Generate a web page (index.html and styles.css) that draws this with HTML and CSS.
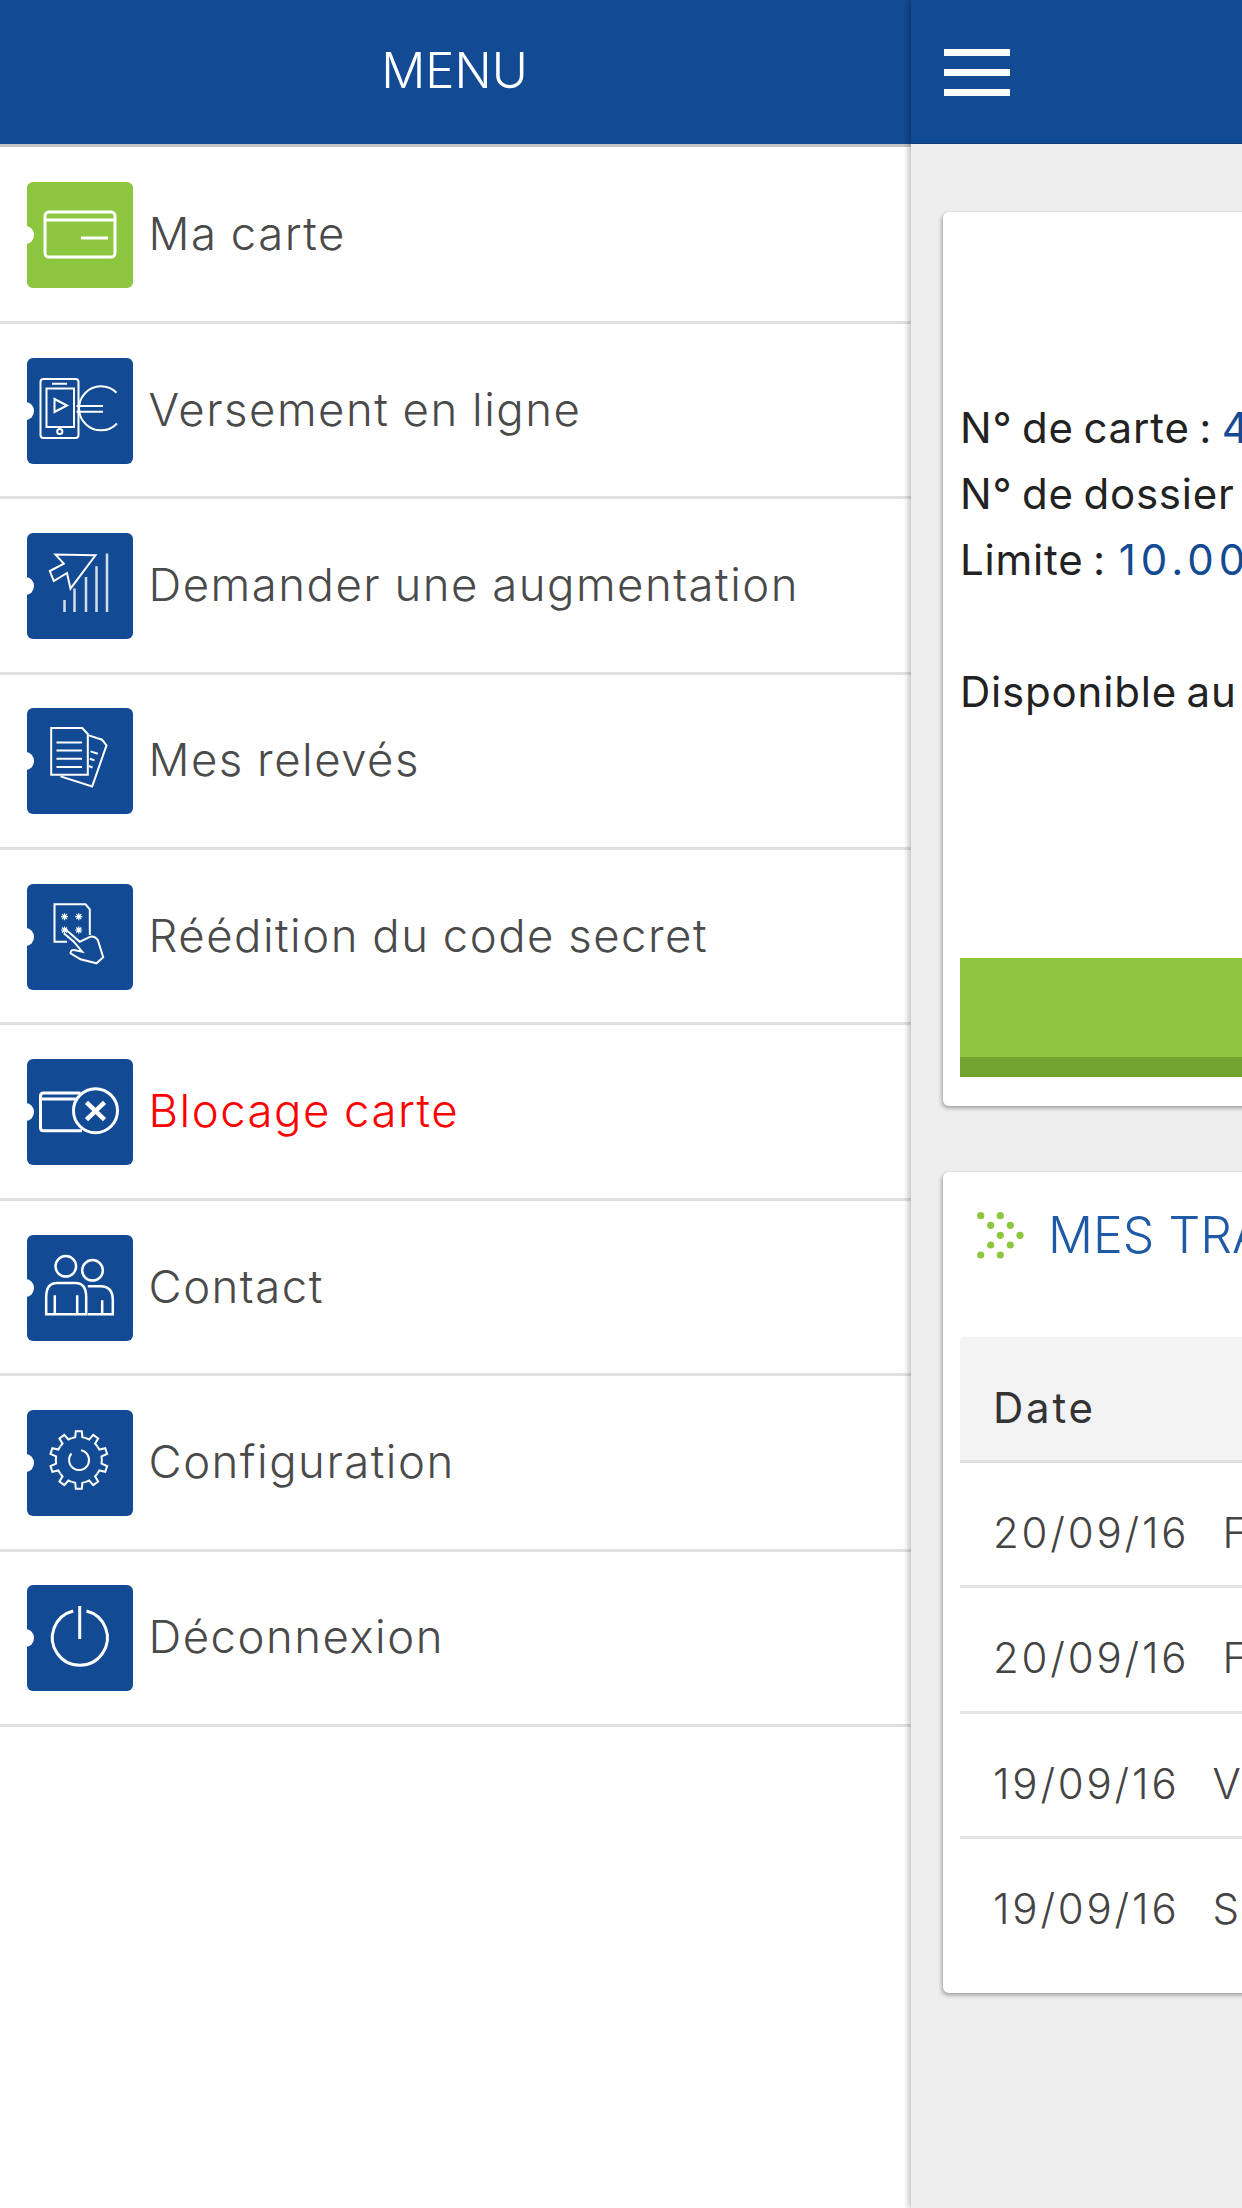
FILE: index.html
```html
<!DOCTYPE html>
<html lang="fr">
<head>
  <meta charset="UTF-8" />
  <meta name="viewport" content="width=device-width, initial-scale=1.0" />
  <title>Menu</title>
  <link rel="stylesheet" href="styles.css">
</head>
<body>
  <div class="app">
    <nav class="menu">
      <div class="menu-header">MENU</div>
      <ul class="menu-list">
        <li class="menu-item">
          <span class="menu-icon menu-icon-green">
            <svg viewBox="0 0 106 106" class="thick"><rect x="18" y="30" width="70" height="45" rx="4"/><path d="M18 38H88M54 56H81"/></svg>
          </span>
          <span class="menu-label">Ma carte</span>
        </li>
        <li class="menu-item">
          <span class="menu-icon">
            <svg viewBox="0 0 106 106" class="thin"><rect x="13.5" y="21" width="38" height="59" rx="3"/><rect x="19.5" y="30.5" width="27.5" height="38.5"/><path d="M25 25.7H40M27.5 41L40 47.5L27.5 54ZM89.5 34.7A22 22 0 1 0 90 65.5M49.5 48H76M49.5 53.7H76"/><circle cx="32.8" cy="73.5" r="2.6"/></svg>
          </span>
          <span class="menu-label">Versement en ligne</span>
        </li>
        <li class="menu-item">
          <span class="menu-icon">
            <svg viewBox="0 0 106 106" class="thin"><path d="M68.5 22.3L28.5 21.6L36.8 30.6L22.8 38L26.8 48L40 40L43.5 55.6Z"/><path d="M37.5 67V79M47.5 55.6V79M59 44V79M69.5 33.3V79M80 20.6V79" class="bars"/></svg>
          </span>
          <span class="menu-label">Demander une augmentation</span>
        </li>
        <li class="menu-item">
          <span class="menu-icon">
            <svg viewBox="0 0 106 106" class="thin"><path d="M24.2 20H55.2L60.8 26V66.7H24.2Z"/><path d="M29.5 34.4H55M29.5 42.4H55M29.5 50.7H55M29.5 59H55"/><path d="M61.8 27.4L75 31.7L79.5 37.4L65.2 78.4L33.5 68.4M63.5 43.4L70.8 45.7M62.8 50.7L67.5 52.4M61.8 58L65.5 59.5"/></svg>
          </span>
          <span class="menu-label">Mes relevés</span>
        </li>
        <li class="menu-item">
          <span class="menu-icon">
            <svg viewBox="0 0 106 106" class="thin">
              <path d="M40 57.7H27.5V20.3H58.5L62.8 25.3V51"/>
              <path d="M37 44L52.8 57.7L63.5 52.7Q68 52 70.8 56L76.2 73.3L69.5 79.3L53.5 75.3L43.5 69.3Q44 65.5 47 66L55.2 67.7L46.8 57.7L36.8 49.3"/>
              <path class="stars" d="M34 32.7H41M37.5 29.2V36.2M35 30.2L40 35.2M40 30.2L35 35.2M48.3 32.7H55.3M51.8 29.2V36.2M49.3 30.2L54.3 35.2M54.3 30.2L49.3 35.2M34 46H41M37.5 42.5V49.5M35 43.5L40 48.5M40 43.5L35 48.5M48.3 46H55.3M51.8 42.5V49.5M49.3 43.5L54.3 48.5M54.3 43.5L49.3 48.5"/>
            </svg>
          </span>
          <span class="menu-label">Réédition du code secret</span>
        </li>
        <li class="menu-item menu-item-alert">
          <span class="menu-icon">
            <svg viewBox="0 0 106 106" class="thick"><path d="M53.5 34H16.5Q13.5 34 13.5 37V68.7Q13.5 71.7 16.5 71.7H55M13.5 40H48.5"/><circle cx="68.5" cy="51.7" r="22"/><path d="M59.5 43.4L77.5 60.7M77.5 43.4L59.5 60.7" class="cross"/></svg>
          </span>
          <span class="menu-label">Blocage carte</span>
        </li>
        <li class="menu-item">
          <span class="menu-icon">
            <svg viewBox="0 0 106 106"><circle cx="38.8" cy="31.3" r="10.3"/><circle cx="65.5" cy="35.3" r="10.3"/><path d="M19.2 79.3V62Q19.2 48 30 48H48.5Q59.2 48 59.2 62V79.3ZM27.8 60.3V79.3M50.2 60.3V79.3"/><path d="M60.8 51.3H73.5Q85.8 51.3 85.8 65.3V79.3H60.8M75.2 65.3V79.3"/></svg>
          </span>
          <span class="menu-label">Contact</span>
        </li>
        <li class="menu-item">
          <span class="menu-icon">
            <svg viewBox="0 0 106 106" class="thin">
              <g transform="translate(51.8 50)">
                <path id="tooth" d="M-7.1 -21.9L-3.6 -22.7L-3 -28.8L3 -28.8L3.6 -22.7L7.1 -21.9"/>
                <use href="#tooth" transform="rotate(36)"/>
                <use href="#tooth" transform="rotate(72)"/>
                <use href="#tooth" transform="rotate(108)"/>
                <use href="#tooth" transform="rotate(144)"/>
                <use href="#tooth" transform="rotate(180)"/>
                <use href="#tooth" transform="rotate(216)"/>
                <use href="#tooth" transform="rotate(252)"/>
                <use href="#tooth" transform="rotate(288)"/>
                <use href="#tooth" transform="rotate(324)"/>
              </g>
              <path d="M54 40.2A10 10 0 1 1 44.5 43.5"/>
            </svg>
          </span>
          <span class="menu-label">Configuration</span>
        </li>
        <li class="menu-item">
          <span class="menu-icon">
            <svg viewBox="0 0 106 106" class="thick"><path d="M46.2 26A27.5 27.5 0 1 0 59.5 26M52.7 21V54"/></svg>
          </span>
          <span class="menu-label">Déconnexion</span>
        </li>
      </ul>
    </nav>

    <main class="main">
      <header class="main-header">
        <div class="burger"><span></span><span></span><span></span></div>
      </header>
      <section class="card card-info">
        <p>N° de carte : <span class="value">4</span></p>
        <p>N° de dossier</p>
        <p>Limite : <span class="value value-wide">10.00</span></p>
        <p class="available">Disponible au</p>
        <div class="green-button"></div>
      </section>
      <section class="card card-transactions">
        <h2 class="section-title">
          <svg class="dots" viewBox="0 0 48 48">
            <circle cx="4.7" cy="4.7" r="3.6"/><circle cx="24.3" cy="4.7" r="3.6"/>
            <circle cx="14.7" cy="14.3" r="3.6"/><circle cx="34.3" cy="14.3" r="3.6"/>
            <circle cx="24.3" cy="24.3" r="3.6"/><circle cx="44" cy="24.3" r="3.6"/>
            <circle cx="14.7" cy="34" r="3.6"/><circle cx="34.3" cy="34" r="3.6"/>
            <circle cx="4.7" cy="44" r="3.6"/><circle cx="24.3" cy="44" r="3.6"/>
          </svg>
          <span>MES TRA</span>
        </h2>
        <div class="table">
          <div class="table-head">Date</div>
          <div class="table-row"><span>20/09/16</span><span>F</span></div>
          <div class="table-row"><span>20/09/16</span><span>F</span></div>
          <div class="table-row"><span>19/09/16</span><span>V</span></div>
          <div class="table-row"><span>19/09/16</span><span>SA</span></div>
        </div>
      </section>
    </main>
  </div>
</body>
</html>
```
FILE: styles.css
```css
* {
  margin: 0;
  padding: 0;
  box-sizing: border-box;
  font-family: 'Inter', sans-serif;
}

body {
  background-color: #fff;
}

.app {
  display: flex;
  width: 1242px;
  height: 2208px;
  overflow: hidden;
}

.menu {
  flex: none;
  width: 911px;
  background: #fff;
}

.menu-header {
  height: 147px;
  padding: 38px 2px 0 0;
  border-bottom: 3px solid #c4c4c4;
  background: #124a93;
  color: #fff;
  font-size: 49px;
  font-weight: 300;
  line-height: 66px;
  text-align: center;
}

.menu-list {
  list-style: none;
  padding-top: 1.5px;
}

.menu-item {
  display: flex;
  align-items: center;
  gap: 16px;
  height: 175.4px;
  padding-left: 26.5px;
  padding-top: 1px;
  border-bottom: 3px solid #e0e0e0;
  color: #4a4a4a;
  font-size: 45.5px;
  font-weight: 300;
  letter-spacing: 1.5px;
  word-spacing: -1px;
}

.menu-label {
  margin-bottom: 3px;
}

.menu-item-alert {
  color: #f00;
}

.menu-icon {
  position: relative;
  flex: none;
  width: 106px;
  height: 106px;
  border-radius: 6px;
  background: #124a93;
}

.menu-icon-green {
  background: #8dc63f;
}

.menu-icon::before {
  content: '';
  position: absolute;
  left: -9px;
  top: 44px;
  width: 16px;
  height: 18px;
  border-radius: 50%;
  background: #fff;
}

.menu-icon svg {
  display: block;
  width: 106px;
  height: 106px;
  fill: none;
  stroke: #fff;
  stroke-width: 2.5;
}

.menu-icon svg.thin {
  stroke-width: 2;
}

.menu-icon svg.thick {
  stroke-width: 3;
}

.menu-icon .bars {
  stroke-width: 2.5;
  stroke: #d4deeb;
}

.menu-icon .stars {
  stroke-width: 1.2;
}

.menu-icon .cross {
  stroke-width: 4.5;
}

.main {
  position: relative;
  flex: none;
  width: 900px;
  background: #eee;
  box-shadow: -3px 0 5px rgba(0, 0, 0, 0.22);
}

.main-header {
  height: 144px;
  padding: 49px 0 0 33px;
  border-bottom: 1px solid #0e3c78;
  background: #124a93;
}

.burger {
  display: flex;
  flex-direction: column;
  gap: 13px;
  width: 66px;
}

.burger span {
  height: 7px;
  background: #fff;
}

.card {
  margin-left: 32px;
  border-radius: 6px;
  background: #fff;
  box-shadow: -1px 2px 4px rgba(0, 0, 0, 0.35);
}

.card-info {
  margin-top: 68px;
  height: 894px;
  padding: 183px 0 0 17px;
  color: #222;
  font-size: 42px;
  letter-spacing: 0.8px;
  word-spacing: -3px;
  line-height: 66px;
  white-space: nowrap;
}

.value {
  color: #124a93;
}

.value-wide {
  margin-left: 3px;
  letter-spacing: 5px;
}

.available {
  margin-top: 66px;
}

.green-button {
  height: 119px;
  margin-top: 233px;
  border-bottom: 20px solid #72a22f;
  background: #8dc63f;
}

.card-transactions {
  margin-top: 66px;
  height: 821px;
  padding: 0 0 0 17px;
}

.section-title {
  display: flex;
  align-items: center;
  gap: 24px;
  height: 165px;
  padding: 0 0 40px 16px;
  color: #1f5aa6;
  font-size: 50px;
  font-weight: 300;
  white-space: nowrap;
}

.dots {
  flex: none;
  width: 48px;
  height: 48px;
  fill: #8dc63f;
}

.table-head {
  height: 125.5px;
  padding: 38px 0 0 33px;
  border-bottom: 3px solid #e0e0e0;
  border-radius: 4px 0 0 0;
  background: #f3f3f3;
  color: #333;
  font-size: 42px;
  letter-spacing: 2.8px;
  line-height: 66px;
}

.table-row {
  display: flex;
  gap: 33px;
  height: 125.5px;
  padding: 37px 0 0 33px;
  border-bottom: 3px solid #e4e4e4;
  color: #444;
  font-size: 42px;
  font-weight: 300;
  letter-spacing: 2.8px;
  line-height: 66px;
}

.table-row:last-child {
  border-bottom: none;
}
```
